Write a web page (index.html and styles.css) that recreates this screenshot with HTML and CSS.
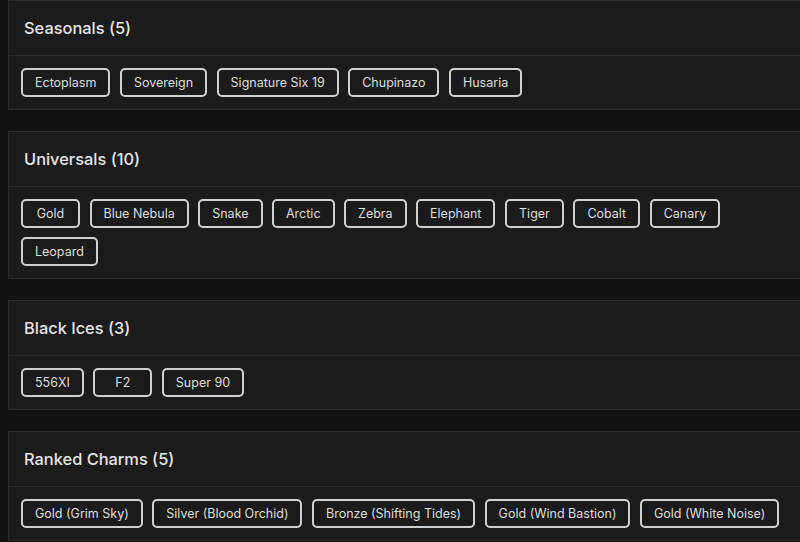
FILE: index.html
```html
<!DOCTYPE html>
<html lang="en">
<head>
    <meta charset="UTF-8">
    <meta name="viewport" content="width=device-width, initial-scale=1.0">
    <title>Charms</title>
    <link rel="stylesheet" href="styles.css">
</head>
<body>

    <!-- Seasonals -->
    <div class="card">
        <div class="card-header"><h3>Seasonals (5)</h3></div>
        <div class="card-body">
            <span class="tag">Ectoplasm</span>
            <span class="tag">Sovereign</span>
            <span class="tag">Signature Six 19</span>
            <span class="tag">Chupinazo</span>
            <span class="tag">Husaria</span>
        </div>
    </div>

    <!-- Universals -->
    <div class="card">
        <div class="card-header"><h3>Universals (10)</h3></div>
        <div class="card-body">
            <span class="tag">Gold</span>
            <span class="tag">Blue Nebula</span>
            <span class="tag">Snake</span>
            <span class="tag">Arctic</span>
            <span class="tag">Zebra</span>
            <span class="tag">Elephant</span>
            <span class="tag">Tiger</span>
            <span class="tag">Cobalt</span>
            <span class="tag">Canary</span>
            <span class="tag">Leopard</span>
        </div>
    </div>

    <!-- Black Ices -->
    <div class="card">
        <div class="card-header"><h3>Black Ices (3)</h3></div>
        <div class="card-body">
            <span class="tag">556XI</span>
            <span class="tag">F2</span>
            <span class="tag">Super 90</span>
        </div>
    </div>

    <!-- Ranked Charms -->
    <div class="card">
        <div class="card-header"><h3>Ranked Charms (5)</h3></div>
        <div class="card-body">
            <span class="tag">Gold (Grim Sky)</span>
            <span class="tag">Silver (Blood Orchid)</span>
            <span class="tag">Bronze (Shifting Tides)</span>
            <span class="tag">Gold (Wind Bastion)</span>
            <span class="tag">Gold (White Noise)</span>
        </div>
    </div>

</body>
</html>
```

FILE: styles.css
```css
body { margin: 0; padding: 0 0 0 8px; background: #121212; color: #e2e2e2; font-family: Inter, "Open Sans", sans-serif; overflow: hidden; }
.card { width: 860px; background: #1b1b1b; border: 1px solid #2b2b2b; margin-bottom: 21px; }
.card-header { height: 54px; display: flex; align-items: center; padding: 0 15px; border-bottom: 1px solid #2b2b2b; }
.card-header h3 { margin: 0; font-size: 16.4px; font-weight: 500; color: #e4e4e4; }
.card-body { display: flex; flex-wrap: wrap; width: 770px; gap: 9px 9.5px; padding: 12px; }
.tag { height: 29px; min-width: 59px; box-sizing: border-box; display: flex; align-items: center; justify-content: center; padding: 0 12px; border: 2px solid #d0d0d0; border-radius: 5px; font-size: 12.5px; color: #dedede; }
```
